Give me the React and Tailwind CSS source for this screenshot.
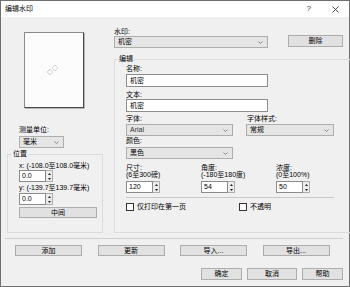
import React from "react";

const Chevron = () => (
  <svg width="5" height="3" viewBox="0 0 5 3" className="shrink-0">
    <polyline points="0.5,0.5 2.5,2.5 4.5,0.5" fill="none" stroke="#707070" strokeWidth="0.8" />
  </svg>
);

const Select = ({ className, children }) => (
  <div className={`flex h-[12px] items-center justify-between border border-[#adadad] bg-[#e5e5e5] pl-[3px] pr-[4px] leading-[10px] ${className}`}>
    <span>{children}</span>
    <Chevron />
  </div>
);

const Spin = ({ value }) => (
  <div className="flex h-[12px]">
    <div className="flex h-full w-[27px] items-center border border-[#8c8c8c] bg-white pl-[2px] leading-[10px]">{value}</div>
    <div className="flex h-full w-[7px] flex-col items-center justify-around border border-l-0 border-[#adadad] bg-[#ececec]">
      <svg width="3" height="2" viewBox="0 0 3 2">
        <polygon points="0,2 1.5,0 3,2" fill="#222" />
      </svg>
      <svg width="3" height="2" viewBox="0 0 3 2">
        <polygon points="0,0 1.5,2 3,0" fill="#222" />
      </svg>
    </div>
  </div>
);

const Btn = ({ className, children }) => (
  <div className={`flex items-center justify-center border border-[#adadad] bg-[#e1e1e1] leading-[10px] ${className}`}>{children}</div>
);

const Check = ({ children, className }) => (
  <div className={`flex h-[8px] items-center gap-[3px] leading-[8px] ${className}`}>
    <div className="h-[8px] w-[8px] border border-[#333] bg-white" />
    <span>{children}</span>
  </div>
);

export default function App() {
  return (
    <div className="flex h-[287px] w-[350px] flex-col border border-[#6f6f6f] bg-[#f0f0f0] font-['Liberation_Sans','Noto_Sans_CJK_SC',sans-serif] text-[7px] text-black">
      {/* Title bar */}
      <div className="flex h-[16px] shrink-0 items-center bg-white pl-[4px] pr-[10px] text-[7px] leading-[8px]">
        <span>编辑水印</span>
        <span className="ml-auto mr-[21px] text-[8px] text-[#333]">?</span>
        <svg width="7" height="7" viewBox="0 0 7 7">
          <path d="M0.5 0.5 L6.5 6.5 M6.5 0.5 L0.5 6.5" stroke="#222" strokeWidth="0.8" />
        </svg>
      </div>

      <div className="flex flex-col px-[6px]">
        <div className="flex h-[216px] gap-[11px]">
          {/* Left column */}
          <div className="flex w-[96px] flex-col">
            <div className="ml-[17px] mt-[15px] flex h-[77px] w-[60px] items-center justify-center border border-[#8a8a8a] border-b-[#4a4a4a] border-r-[#4a4a4a] bg-[#fcfcfc] shadow-[1px_1px_0_#b5b5b5]">
              <svg width="14" height="14" viewBox="0 0 14 14" className="ml-[-2px] mt-[2px]">
                <polygon points="4,5 7,8 4,11 1,8" fill="none" stroke="#c8c8c8" strokeWidth="0.8" />
                <polygon points="9,1 12,4 9,7 6,4" fill="none" stroke="#c8c8c8" strokeWidth="0.8" />
              </svg>
            </div>
            <div className="ml-[12px] mt-[18px] leading-[8px]">测量单位:</div>
            <Select className="ml-[12px] mt-[2px] h-[10px] w-[45px]">毫米</Select>
            <fieldset className="mt-[2px] h-[84px] border border-[#dcdcdc] p-0">
              <legend className="ml-[4px] px-[1px] leading-[8px]">位置</legend>
              <div className="flex flex-col pl-[11px]">
                <div className="mt-[4px] leading-[8px]">x: (-108.0至108.0毫米)</div>
                <Spin value="0.0" />
                <div className="mt-[2px] leading-[8px]">y: (-139.7至139.7毫米)</div>
                <div className="mt-[1px]">
                  <Spin value="0.0" />
                </div>
                <Btn className="mt-[2px] h-[11px] w-[78px]">中间</Btn>
              </div>
            </fieldset>
          </div>

          {/* Right column */}
          <div className="flex w-[229px] flex-col">
            <div className="flex items-end">
              <div className="flex flex-col">
                <div className="mt-[11px] leading-[8px]">水印:</div>
                <Select className="w-[154px]">机密</Select>
              </div>
              <Btn className="mb-[1px] ml-auto h-[12px] w-[55px]">删除</Btn>
            </div>
            <fieldset className="mt-[7px] h-[178px] border border-[#dcdcdc] p-0">
              <legend className="ml-[3px] px-[1px] leading-[8px]">编辑</legend>
              <div className="flex flex-col pl-[11px]">
                <div className="mt-[2px] leading-[8px]">名称:</div>
                <div className="mt-[1px] flex h-[13px] w-[142px] items-center border border-[#8c8c8c] bg-white pl-[3px] leading-[10px]">机密</div>
                <div className="mt-[4px] leading-[8px]">文本:</div>
                <div className="flex h-[13px] w-[142px] items-center border border-[#8c8c8c] bg-white pl-[3px] leading-[10px]">机密</div>
                <div className="mt-[3px] flex leading-[8px]">
                  <span className="w-[121px]">字体:</span>
                  <span>字体样式:</span>
                </div>
                <div className="mt-[1px] flex gap-[13px]">
                  <Select className="w-[107px] text-[#333]">Arial</Select>
                  <Select className="w-[88px]">常规</Select>
                </div>
                <div className="mt-[1px] leading-[8px]">颜色:</div>
                <Select className="mt-[2px] w-[107px]">黑色</Select>
                <div className="mt-[5px] grid grid-cols-[75px_75px_75px] leading-[7px]">
                  <div>
                    <div>尺寸:</div>
                    <div>(6至300磅)</div>
                  </div>
                  <div>
                    <div>角度:</div>
                    <div>(-180至180度)</div>
                  </div>
                  <div>
                    <div>浓度:</div>
                    <div>(0至100%)</div>
                  </div>
                </div>
                <div className="mt-[3px] grid grid-cols-[75px_75px_75px]">
                  <Spin value="120" />
                  <Spin value="54" />
                  <Spin value="50" />
                </div>
                <div className="mt-[4px] w-[208px] border-t border-[#c8c8c8]" />
                <div className="mt-[5px] flex">
                  <Check className="w-[113px]">仅打印在第一页</Check>
                  <Check>不透明</Check>
                </div>
              </div>
            </fieldset>
          </div>
        </div>

        <div className="-ml-[2px] mt-[5px] w-[338px] border-t border-[#cfcfcf]" />

        <div className="ml-[8px] mt-[6px] flex gap-[15.5px]">
          <Btn className="h-[11px] w-[67px]">添加</Btn>
          <Btn className="h-[11px] w-[67px]">更新</Btn>
          <Btn className="h-[11px] w-[67px]">导入...</Btn>
          <Btn className="h-[11px] w-[67px]">导出...</Btn>
        </div>

        <div className="mt-[12px] flex justify-end gap-[5px]">
          <Btn className="h-[12px] w-[41px] border-[#0078d7]">确定</Btn>
          <Btn className="h-[12px] w-[50px]">取消</Btn>
          <Btn className="h-[12px] w-[41px]">帮助</Btn>
        </div>
      </div>
    </div>
  );
}
